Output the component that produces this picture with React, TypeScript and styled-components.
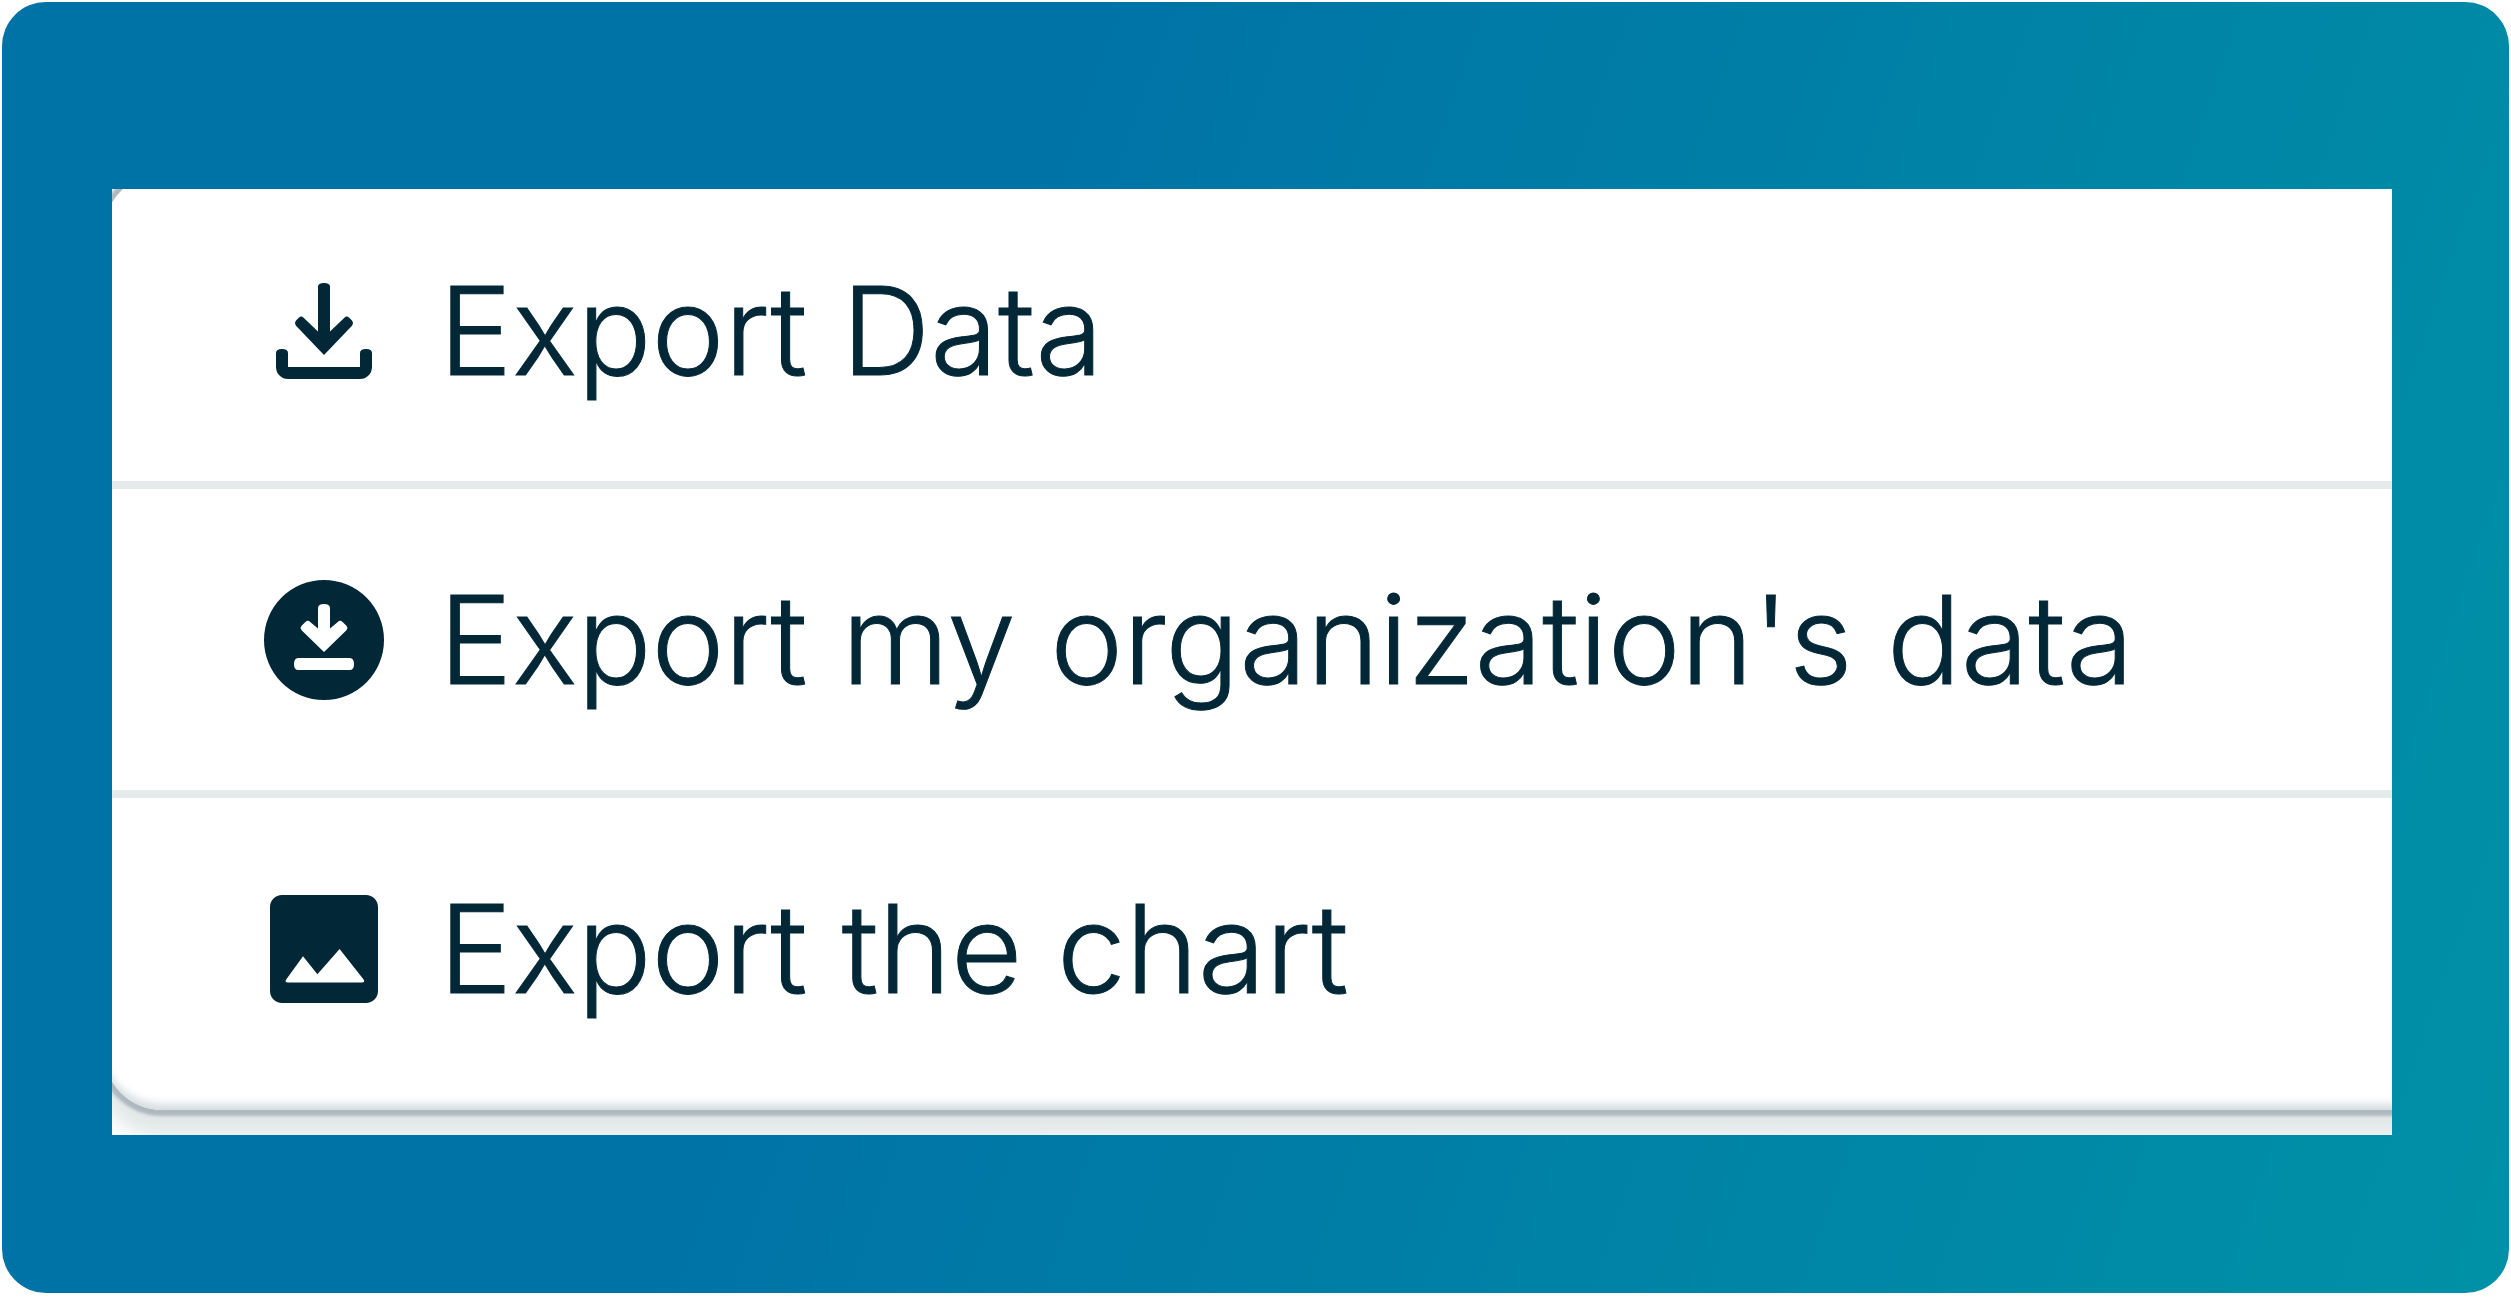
import React from "react";
import styled, { createGlobalStyle } from "styled-components";

const GlobalStyle = createGlobalStyle`
  *, *::before, *::after { box-sizing: border-box; }
  body { margin: 0; background: #ffffff; }
`;

const Backdrop = styled.main`
  margin: 2px 2px 4px;
  padding: 187px 117px 158px 110px;
  border-radius: 44px;
  background: linear-gradient(109deg, #0073a6 37%, #0091a6 100%);
`;

const Viewport = styled.div`
  overflow: hidden;
  background: #fdfdfe;
`;

const Menu = styled.ul`
  list-style: none;
  margin: -15px -80px 25px -8px;
  padding: 6px 0 11px;
  border-radius: 58px;
  background: #ffffff;
  box-shadow:
    inset 0 -9px 8px -3px #d6dcdf,
    0 0 3px 6px #aeb9bf,
    0 20px 16px 6px #e3e8e9;
`;

const Item = styled.li`
  & + & { border-top: 8px solid #e5eaea; }
`;

const Action = styled.button`
  display: flex;
  align-items: center;
  gap: 43px;
  width: 100%;
  padding: 72px 148px;
  border: 0;
  background: transparent;
  color: #022736;
  font: 300 123px/157px Inter, "Liberation Sans", sans-serif;
  -webkit-text-stroke: 1px #022736;
  text-align: left;
  white-space: nowrap;
  cursor: pointer;
`;

const Glyph = styled.svg`
  flex: none;
  width: 144px;
  height: 144px;
  fill: #022736;
`;

const actions = [
  {
    label: "Export Data",
    path: "M12 16l-4.7-4.9q-.3-.4 0-.8l.5-.5q.4-.4.8 0L11 12.1V4.6q0-.6 1-.6t1 .6v7.5l2.4-2.3q.4-.4.8 0l.5.5q.3.4 0 .8L12 16zm-6 4q-.825 0-1.413-.587T4 18v-2.3q0-.7 1-.7t1 .7V18h12v-2.3q0-.7 1-.7t1 .7V18q0 .825-.587 1.413T18 20H6z",
  },
  {
    label: "Export my organization's data",
    path: "M12 2a10 10 0 1 0 0 20a10 10 0 1 0 0-20zM7.7 17q-.7 0-.7-1t.7-1h8.6q.7 0 .7 1t-.7 1zM12 14l-3.7-3.6q-.4-.4 0-.8l.6-.6q.4-.4.8 0L11 10.1V6.7q0-.7 1-.7t1 .7v3.4L14.3 9q.4-.4.8 0l.6.6q.4.4 0 .8z",
  },
  {
    label: "Export the chart",
    path: "M21 19V5c0-1.1-.9-2-2-2H5c-1.1 0-2 .9-2 2v14c0 1.1.9 2 2 2h14c1.1 0 2-.9 2-2zM8.5 13.2l2.4 3L14.6 12l4 5.1q.3.5-.3.5H6q-.6 0-.3-.5z",
  },
];

export default function App() {
  return (
    <>
      <GlobalStyle />
      <Backdrop>
        <Viewport>
          <Menu>
            {actions.map(({ label, path }) => (
              <Item key={label}>
                <Action type="button">
                  <Glyph viewBox="0 0 24 24" aria-hidden="true">
                    <path fillRule="evenodd" d={path} />
                  </Glyph>
                  {label}
                </Action>
              </Item>
            ))}
          </Menu>
        </Viewport>
      </Backdrop>
    </>
  );
}
